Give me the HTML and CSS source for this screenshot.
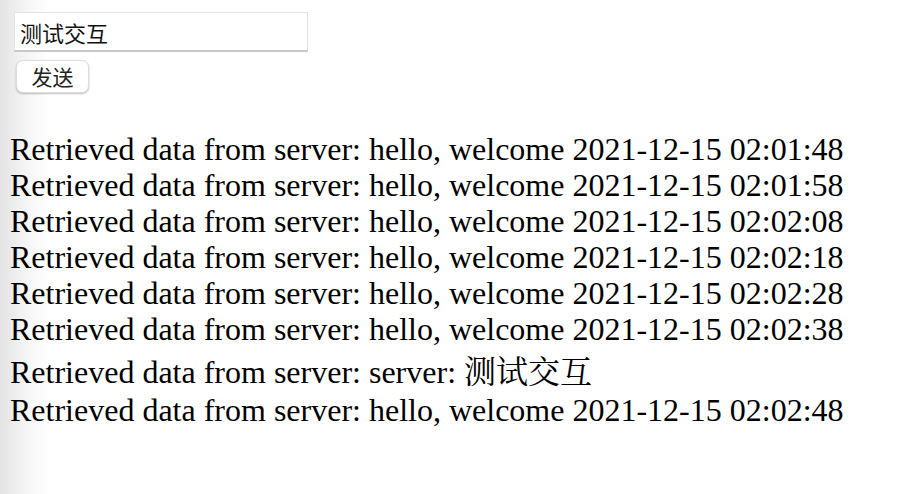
FILE: index.html
```html
<!DOCTYPE html>
<html lang="zh">
<head>
<meta charset="utf-8">
<title>WebSocket</title>
<link rel="stylesheet" href="styles.css">
</head>
<body>
<div class="page">
  <div class="controls">
    <input class="msg-input" type="text" value="测试交互">
    <button class="send-btn" type="button">发送</button>
  </div>
  <div class="log">
    <div class="line">Retrieved data from server: hello, welcome 2021-12-15 02:01:48</div>
    <div class="line">Retrieved data from server: hello, welcome 2021-12-15 02:01:58</div>
    <div class="line">Retrieved data from server: hello, welcome 2021-12-15 02:02:08</div>
    <div class="line">Retrieved data from server: hello, welcome 2021-12-15 02:02:18</div>
    <div class="line">Retrieved data from server: hello, welcome 2021-12-15 02:02:28</div>
    <div class="line">Retrieved data from server: hello, welcome 2021-12-15 02:02:38</div>
    <div class="line cjk-line">Retrieved data from server: server: <span class="cjk">测试交互</span></div>
    <div class="line">Retrieved data from server: hello, welcome 2021-12-15 02:02:48</div>
  </div>
</div>
</body>
</html>
```
FILE: styles.css
```css
html, body {
  margin: 0;
  padding: 0;
  height: 100%;
}
body {
  background: linear-gradient(to right, #e4e4e4 0, #f6f6f6 28px, #ffffff 50px);
  color: #000;
  font-family: "Liberation Serif", "Times New Roman", serif;
}
.page {
  padding: 12px 0 0 10px;
}
.controls {
  display: flex;
  flex-direction: column;
  align-items: flex-start;
  gap: 8px;
  padding-left: 4px;
}
.msg-input {
  box-sizing: border-box;
  width: 294px;
  height: 40px;
  margin: 0;
  padding: 0 5px;
  border: 1px solid #e2e2e2;
  border-bottom: 2px solid #c9c9c9;
  background: #fff;
  font-family: "Noto Sans CJK SC", "Noto Sans", sans-serif;
  font-size: 22px;
  color: #111;
  outline: none;
}
.send-btn {
  box-sizing: border-box;
  margin-left: 2px;
  width: 73px;
  height: 33px;
  padding: 0;
  border: 1px solid #dcdcdc;
  border-radius: 7px;
  background: #fff;
  box-shadow: 0 1px 2px rgba(0,0,0,0.25);
  font-family: "Noto Sans CJK SC", "Noto Sans", sans-serif;
  font-size: 21px;
  line-height: 1;
  color: #222;
}
.log {
  margin-top: 38px;
  font-size: 32px;
}
.line {
  line-height: 36px;
  white-space: nowrap;
}
.cjk-line {
  line-height: 40px;
  margin-top: 2px;
}
.cjk {
  font-family: "Noto Serif CJK SC", "Noto Sans CJK SC", serif;
  font-size: 32px;
}
```
